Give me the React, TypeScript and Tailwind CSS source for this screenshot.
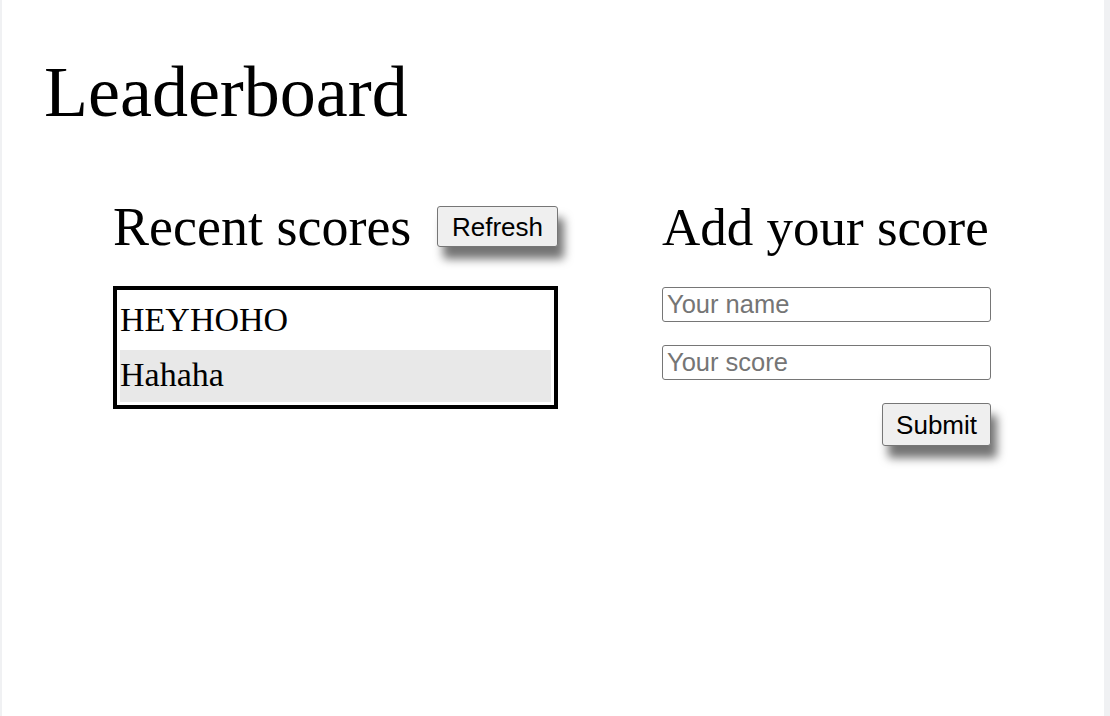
import React from "react";

const serif = { fontFamily: "'Liberation Serif', 'Times New Roman', serif" };
const sans = { fontFamily: "'Liberation Sans', Arial, sans-serif" };

const scores = ["HEYHOHO", "Hahaha"];

const btn =
  "bg-[#efefef] border border-[#767676] rounded-[3px] text-[26px] leading-none text-black shadow-[6px_12px_10px_rgba(0,0,0,0.55)]";

export default function App() {
  return (
    <div className="flex min-h-screen bg-[#f0f1f3]">
      <div className="ml-[2px] w-[1102px] h-[716px] bg-white" style={serif}>
        <h1 className="pl-[42px] pt-[56px] text-[72px] leading-none font-normal text-black">Leaderboard</h1>

        <div className="flex pl-[111px] gap-[104px] mt-[72px]">
          {/* left column */}
          <section className="w-[445px]">
            <div className="flex items-center justify-between h-[53px]">
              <h2 className="text-[54px] leading-none font-normal text-black">Recent scores</h2>
              <button className={`${btn} h-[41px] px-[14px]`} style={sans}>
                Refresh
              </button>
            </div>
            <ul className="mt-[33px] border-4 border-black pt-[5px] pb-[3px] px-[3px] flex flex-col gap-[3px]">
              {scores.map((s, i) => (
                <li
                  key={i}
                  className={`h-[52px] pt-[8px] text-[34px] leading-none text-black ${i === 1 ? "bg-[#e8e8e8]" : "bg-white"}`}
                >
                  {s}
                </li>
              ))}
            </ul>
          </section>

          {/* right column */}
          <section className="w-[329px] flex flex-col">
            <h2 className="h-[53px] pt-[1px] text-[53px] leading-none font-normal text-black whitespace-nowrap">Add your score</h2>
            <input
              placeholder="Your name"
              className="mt-[34px] h-[35px] w-full border border-[#767676] rounded-[3px] px-[4px] text-[25.5px] placeholder:text-[#757575] outline-none"
              style={sans}
            />
            <input
              placeholder="Your score"
              className="mt-[23px] h-[35px] w-full border border-[#767676] rounded-[3px] px-[4px] text-[25.5px] placeholder:text-[#757575] outline-none"
              style={sans}
            />
            <button className={`${btn} self-end mt-[23px] h-[43px] px-[13px]`} style={sans}>
              Submit
            </button>
          </section>
        </div>
      </div>
    </div>
  );
}
